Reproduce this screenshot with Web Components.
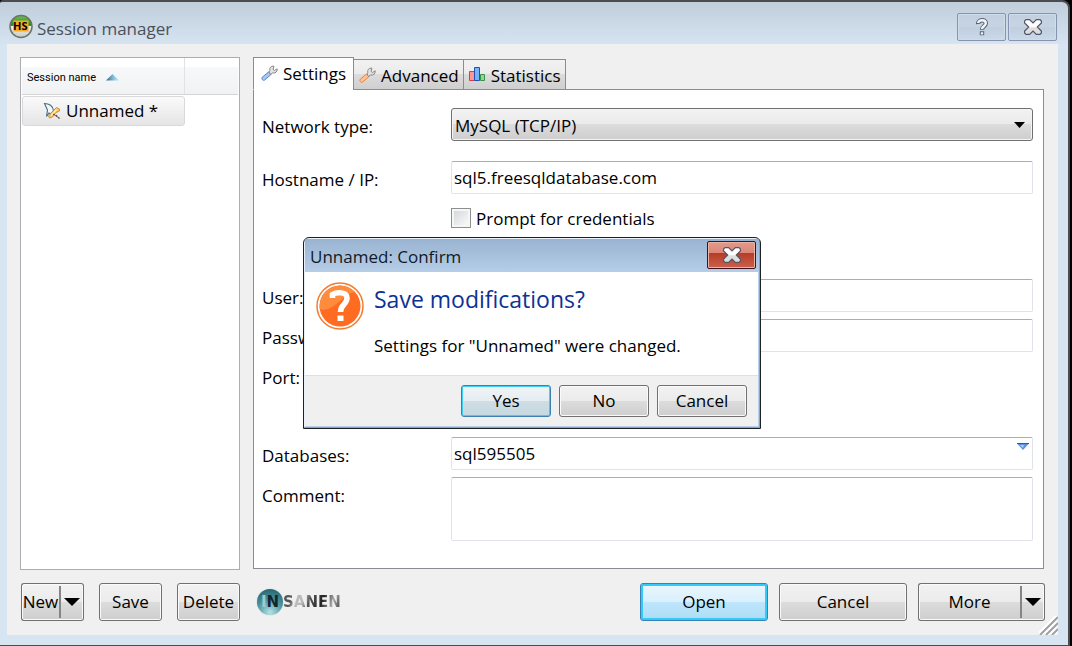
<!DOCTYPE html>
<html lang="en">
<head>
<meta charset="utf-8">
<title>Session manager</title>
<style>
html, body { margin: 0; background: #000; }
body { font: 17px/24px "Open Sans", "Noto Sans", sans-serif; color: #000; }
</style>
</head>
<body>
<app-window></app-window>

<template id="t-button">
<style>
:host { display: block; height: 38px; }
.wrap { display: flex; height: 100%; position: relative; }
button { flex: 1; min-width: 0; box-sizing: border-box; height: 100%; padding: 0; margin: 0; font: inherit; line-height: 24px; color: inherit; white-space: nowrap;
  border: 1px solid #707070; border-radius: 3px; box-shadow: inset 0 0 0 1px #fafafa;
  background: linear-gradient(#f2f2f2, #ebebeb 49%, #dcdcdc 50%, #cecece); }
:host([kind="default"]) button { border-color: #3c7fb1; box-shadow: inset 0 0 0 2px #31cbf9; background: linear-gradient(#eaf6fd, #d9f0fc 49%, #bee6fd 50%, #aedcf5); }
:host([kind="focus"]) button { border-color: #3c7fb1; box-shadow: inset 0 0 0 1px #3fd0f8; background: linear-gradient(#f0f4f6, #e5edf1 49%, #cfdde4 50%, #c6d8e0); }
:host([split]) button:first-child { border-right: 0; border-radius: 3px 0 0 3px; box-shadow: inset 1px 1px #fafafa, inset 0 -1px #fafafa; }
.arrow { display: none; }
:host([split]) .arrow { display: block; flex: 0 0 25px; border-left: 0; border-radius: 0 3px 3px 0; padding: 0; box-shadow: inset -1px 1px #fafafa, inset 0 -1px #fafafa; }
:host([split]) .arrow span { display: flex; height: 32px; margin: 2px 0; border-left: 2px solid #858585; align-items: center; justify-content: center; }
</style>
<div class="wrap"><button type="button"><slot></slot></button><button type="button" class="arrow" aria-label="More choices"><span><svg width="16" height="8"><path d="M0 0h16L8 8z"/></svg></span></button></div>
</template>

<template id="t-caption">
<style>
:host { display: block; width: 49px; height: 28px; }
button { display: flex; align-items: center; justify-content: center; width: 100%; height: 100%; box-sizing: border-box; padding: 0; border: 1px solid #8593b0; border-radius: 2px; background: linear-gradient(#c1cfde, #c6d4e3 50%, #bfcfe0 51%, #cbd9e8); box-shadow: inset 0 0 0 1px #d0dcea; }
:host([tone="red"]) button { border-color: #40121c; background: linear-gradient(#e29a8c, #dc8676 43%, #b73c26 44%, #c9614d); box-shadow: inset 0 0 0 1px #ecb3a5; }
svg { display: block; }
.help { display: none; }
:host([icon="help"]) .help { display: block; }
:host([icon="help"]) .cross { display: none; }
</style>
<button type="button">
<svg class="cross" width="18" height="16" viewBox="0 0 18 16"><defs><linearGradient id="g" x2="0" y2="1"><stop offset=".5" stop-color="#fff"/><stop offset=".55" stop-color="#dedede"/></linearGradient></defs><path d="M2 .6h3.600L9 4l3.400-3.400H16l1.400 1.400v2L13.300 8l4.100 4v2L16 15.400h-3.600L9 12l-3.400 3.400H2L.6 14v-2L4.700 8 .6 4V2z" fill="url(#g)" stroke="#535666" stroke-width="1.200"/></svg>
<svg class="help" width="12" height="18" viewBox="0 0 12 18"><path d="M2.200 6C1.800 1.200 9.800 1 9.800 5.200c0 3-3.800 3-3.800 6.600M6 13.300v3.900" fill="none" stroke="#5a6376" stroke-width="4.400"/><path d="M2.200 5C2.200 1.300 9.800 1.300 9.800 5.200c0 3-3.800 3-3.800 5.900M6 14.200v2.200" fill="none" stroke="#f2f5f7" stroke-width="2.400"/></svg>
</button>
</template>

<template id="t-sessions">
<style>
:host { display: block; box-sizing: border-box; border: 1px solid #abadb3; background: #fff; padding: 0 1px; }
table { width: 100%; border-collapse: separate; border-spacing: 0; table-layout: fixed; }
th { height: 37px; padding: 4px 0 0 5px; box-sizing: border-box; font: 11px/14px Roboto, sans-serif; text-align: left; border-bottom: 1px solid #d5d5d5; background: linear-gradient(#fff 24%, #f7f8fa 25%, #f1f2f4); }
th.first { width: 163px; box-shadow: inset -1px 0 #dfe3e8; }
.sort { margin-left: 10px; }
td { padding: 1px 0 0; }
a { display: flex; align-items: center; box-sizing: border-box; height: 30px; padding: 0 0 0 20px; border: 1px solid #d9d9d9; border-radius: 3px; background: linear-gradient(#fafafa, #e5e5e5); color: #000; text-decoration: none; gap: 5px; }
</style>
<table>
<thead><tr><th class="first" scope="col">Session name<svg class="sort" width="13" height="7"><defs><linearGradient id="s"><stop stop-color="#2f6480"/><stop offset=".6" stop-color="#8cc4e0"/><stop offset="1" stop-color="#c4e6f4"/></linearGradient></defs><path d="M0 6.500L6.500 0l6.500 6.500z" fill="url(#s)"/></svg></th><th aria-label="Details"></th></tr></thead>
<tbody><tr><td><a href="#unnamed"><svg width="18" height="18" viewBox="0 0 18 18"><path d="M1.500 1.500C6 1.500 10 4 10.500 8.500L8 12l-2-1-2.500 3.500L4.500 8z" fill="#f3f8fa" stroke="#426e80" stroke-width="1.100"/><path d="M10.500 8.500l3-3 3 1.500v2L13 10.500 9.500 15l-3 1-1-2z" fill="#f7c665" stroke="#b9802f" stroke-width=".8"/><path d="M10 12l3 1.500 3.500 3" stroke="#6b5138" stroke-width="1.500" stroke-dasharray="2 1"/><path d="M8 13.500l5.500-6" stroke="#fff0b0" stroke-width="1.200"/></svg>Unnamed *</a></td><td></td></tr></tbody>
</table>
</template>

<template id="t-field">
<style>
:host { display: grid; grid-template-columns: 189px minmax(0, 1fr); align-items: start; }
label { line-height: 24px; padding-top: 7px; }
.box { position: relative; display: flex; }
input, textarea, select { box-sizing: border-box; width: 100%; margin: 0; font: inherit; line-height: 24px; color: inherit; outline: 0; height: 33px; border-radius: 2px; }
input, textarea { display: block; resize: none; padding: 0 2px; border: 1px solid #e2e3ea; border-top-color: #abadb3; background: #fff; }
textarea { height: 64px; }
.short { width: 120px; }
select { appearance: none; padding: 2px 24px 0 3px; border: 1px solid #707070; border-radius: 3px; box-shadow: inset 0 0 0 1px #f4f4f4; background: linear-gradient(#f2f2f2, #ebebeb 49%, #dcdcdc 50%, #cecece); }
.drop { position: absolute; right: 8px; top: 14px; pointer-events: none; }
.blue { position: absolute; right: 4px; top: 6px; }
</style>
<label for="c"></label><div class="box"></div>
</template>

<template id="t-check">
<style>
:host { display: flex; margin-left: 189px; height: 20px; align-items: center; gap: 5px; }
input { appearance: none; flex: none; width: 20px; height: 20px; box-sizing: border-box; margin: 0; border: 1px solid #8e8f8f; background: linear-gradient(135deg, #cfd3d9, #f5f5f5 80%); box-shadow: inset 0 0 0 2px #f6f6f6; }
label { padding-top: 2px; }
</style>
<input type="checkbox" id="k"><label for="k"><slot></slot></label>
</template>

<template id="t-tabs">
<style>
:host { display: flex; flex-direction: column; }
.tabs { display: flex; align-items: flex-end; position: relative; margin-bottom: -1px; }
button { display: flex; align-items: center; box-sizing: border-box; height: 31px; margin: 0 0 0 -1px; padding: 2px 4px 0 5px; gap: 5px; white-space: nowrap; font: inherit; line-height: 24px; color: inherit; border: 1px solid #898c95; background: linear-gradient(#f2f2f2, #ebebeb 49%, #dcdcdc 50%, #cfcfcf); }
button.on { height: 33px; margin: 0; padding: 0 7px; background: #fff; border-bottom-color: #fff; }
svg { display: block; flex: none; }
.page { flex: 1; border: 1px solid #898c95; background: #fff; padding: 18px 10px 27px 8px; }
</style>
<div class="tabs" role="tablist">
<button type="button" role="tab" aria-selected="true" class="on"><svg width="17" height="17" viewBox="0 0 17 17"><path d="M7.500 7L1.200 12.300c-1.200 1.300.8 3.800 2.400 2.800L10 9.500z" fill="#a9c8f7" stroke="#5982cf"/><path d="M8 7l1.500 2.500 2-1.500c3 .5 5-1.300 4.700-4.200L13.500 5.500 12 4.300 13 1.200C9.800.8 8.200 3 8.800 5.500z" fill="#e3e3e3" stroke="#858585"/></svg>Settings</button>
<button type="button" role="tab" aria-selected="false"><svg width="17" height="17" viewBox="0 0 17 17"><path d="M7.500 7L1.200 12.300c-1.200 1.300.8 3.800 2.400 2.800L10 9.500z" fill="#ffc393" stroke="#ef8140"/><path d="M8 7l1.500 2.500 2-1.500c3 .5 5-1.300 4.700-4.200L13.500 5.500 12 4.300 13 1.200C9.800.8 8.200 3 8.800 5.500z" fill="#e3e3e3" stroke="#858585"/></svg>Advanced</button>
<button type="button" role="tab" aria-selected="false"><svg width="17" height="17" viewBox="0 0 17 17"><path d="M.5 4.500h5v9h-5z" fill="#ff9690" stroke="#dc3b45"/><path d="M11.500 7.500h4v6h-4z" fill="#93d595" stroke="#389448"/><path d="M5.500.5h5v13h-5z" fill="#76b2f8" stroke="#1e50b5"/></svg>Statistics</button>
</div>
<div class="page" role="tabpanel"><slot></slot></div>
</template>

<template id="t-dialog">
<style>
:host { display: block; box-sizing: border-box; width: 458px; border: 1px solid #1c2226; border-radius: 6px 6px 0 0; background: #b9d1ea; padding: 1px; box-shadow: inset -1px -1px #37c4ea, inset 1px 1px #e8f1fa; overflow: hidden; }
header { display: flex; height: 33px; padding: 0 3px 0 5px; background: linear-gradient(#99b4d1, #b5cde7); }
h1 { flex: 1; margin: 0; padding-top: 6px; font: inherit; line-height: 24px; color: #111a26; }
caption-button { margin-top: 2px; }
.main { display: flex; gap: 10px; height: 103px; background: #fff; padding: 10px 10px 0 11px; margin-right: 1px; box-sizing: border-box; }
h2 { margin: 0 0 18px; font: inherit; font-size: 23px; line-height: 34px; color: #0c3296; }
p { margin: 0; }
footer { display: flex; justify-content: flex-end; gap: 8px; height: 51px; box-sizing: border-box; padding: 9px 11px 0; margin: 0 1px 1px 0; border-top: 1px solid #dfdfdf; background: #f0f0f0; }
win-button { width: 90px; height: 32px; }
svg { flex: none; }
</style>
<header><h1>Unnamed: Confirm</h1><caption-button icon="close" tone="red" label="Close dialog"></caption-button></header>
<div class="main">
<svg width="48" height="48" viewBox="0 0 48 48"><circle cx="24" cy="24" r="23" fill="#fff" stroke="#f37b31" stroke-width="1.500"/><circle cx="24" cy="24" r="20.500" fill="#ff6b21"/><path d="M3.800 27A20.500 20.500 0 0 1 39 10C30 11 24 21 14 26c-4 2-8 2-10.200 1z" fill="#ff8c3d"/><path d="M16.500 16v-3.500c4-2.500 14.500-3 14.500 3.500 0 7-6.500 6-6.500 14" fill="none" stroke="#fff" stroke-width="5.500"/><path d="M21.500 33.500h6v5.500h-6z" fill="#fff"/></svg>
<div><h2>Save modifications?</h2><p>Settings for "Unnamed" were changed.</p></div>
</div>
<footer><win-button kind="focus">Yes</win-button><win-button>No</win-button><win-button>Cancel</win-button></footer>
</template>

<template id="t-logo">
<style>
:host { display: flex; align-items: center; height: 28px; font: bold 15px/18px "DejaVu Sans", sans-serif; }
.ball { display: flex; align-items: center; justify-content: center; width: 26px; height: 26px; border-radius: 50%; background: radial-gradient(circle at 50% 90%, #b4e2e5, #4a929d 50%, #2b6673 85%); box-shadow: 0 0 1px #6fb5be; }
.ball span { color: #12272c; } .ball i { font-style: normal; color: #a6c8cc; }
.rest { background: linear-gradient(110deg, #555 0 15%, #bbb 25% 35%, #555 45%, #222 65%, #aaa 82%, #333); -webkit-background-clip: text; background-clip: text; color: transparent; }
</style>
<div class="ball"><span><i>I</i>N</span></div><span class="rest">SANEN</span>
</template>

<template id="t-window">
<style>
:host { display: block; position: relative; }
.frame { display: flex; flex-direction: column; box-sizing: border-box; min-height: 100vh; margin-right: 2px; padding: 0 10px 10px 7px; border: solid #4c4c50; border-width: 2px 2px 1px 0; border-radius: 3px 8px 0 0; background: linear-gradient(#c0cddb, #d7e4f1 44px); }
.bar { display: flex; height: 42px; padding: 0 1px 0 2px; gap: 2px; }
h1 { flex: 1; margin: 0; padding: 15px 0 0 2px; font: inherit; line-height: 24px; color: #49525c; }
.hs { flex: none; margin-top: 12px; }
.hs text { font: bold 11px "Open Sans", sans-serif; }
.bar caption-button { margin-top: 11px; }
.content { position: relative; flex: 1; display: flex; flex-direction: column; gap: 13px; padding: 13px 13px 14px; background: #f0f0f0; }
.cols { flex: 1; display: grid; grid-template-columns: 220px minmax(0, 1fr); gap: 13px; }
settings-tabs { margin-bottom: 1px; margin-right: 1px; }
form { display: block; }
form-field + form-field { margin-top: 7px; }
form-field.wide { margin-top: 20px; }
check-option { margin-top: 14px; }
form-field.user { margin-top: 51px; }
form-field.db { margin-top: 45px; }
.foot { display: flex; gap: 15px; padding-left: 1px; }
.foot win-button { width: 63px; }
insanen-logo { margin: 5px auto 0 2px; }
.right { display: flex; gap: 11px; }
.right win-button { width: 128px; }
.right win-button[split] { width: 127px; }
.grip { position: absolute; right: 0; bottom: 0; }
confirm-dialog { position: absolute; left: 303px; top: 237px; }
</style>
<div class="frame">
<div class="bar">
<svg class="hs" width="24" height="25" viewBox="0 0 24 25"><defs><linearGradient id="b" x2="0" y2="1"><stop stop-color="#6cc455"/><stop offset=".45" stop-color="#1c8a1a"/><stop offset=".5" stop-color="#eee"/><stop offset="1" stop-color="#c9c9c6"/></linearGradient></defs><circle cx="12" cy="12.500" r="11" fill="url(#b)" stroke="#6c7565" stroke-width="1.500"/><path d="M4.500 6.500h15v11h-15z" fill="#f8a823"/><text x="4" y="16">HS</text></svg>
<h1>Session manager</h1>
<caption-button icon="help" label="Help"></caption-button><caption-button icon="close" label="Close"></caption-button>
</div>
<div class="content">
<div class="cols">
<session-list></session-list>
<settings-tabs><form>
<form-field kind="select" label="Network type:" value="MySQL (TCP/IP)"></form-field>
<form-field class="wide" label="Hostname / IP:" value="sql5.freesqldatabase.com"></form-field>
<check-option>Prompt for credentials</check-option>
<form-field class="user" label="User:"></form-field>
<form-field kind="password" label="Password:"></form-field>
<form-field kind="short" label="Port:"></form-field>
<form-field class="db" kind="combo" label="Databases:" value="sql595505"></form-field>
<form-field kind="area" label="Comment:"></form-field>
</form></settings-tabs>
</div>
<div class="foot">
<win-button split>New</win-button><win-button>Save</win-button><win-button>Delete</win-button>
<insanen-logo></insanen-logo>
<div class="right"><win-button kind="default">Open</win-button><win-button>Cancel</win-button><win-button split>More</win-button></div>
</div>
<svg class="grip" width="19" height="19"><path d="M0 19L19 0M7 19L19 7M13 19l6-6" stroke="#fff" stroke-width="5"/><path d="M1 19L19 1M7 19L19 7M13 19l6-6" stroke="#a0a0a0" stroke-width="2"/></svg>
</div>
</div>
<confirm-dialog role="dialog" aria-label="Unnamed: Confirm"></confirm-dialog>
</template>

<script>
class Base extends HTMLElement {
  constructor() {
    super();
    this.attachShadow({ mode: "open" }).append(document.getElementById(this.constructor.template).content.cloneNode(true));
  }
}
const simple = (name, id) => customElements.define(name, class extends Base { static template = id; });

customElements.define("caption-button", class extends Base {
  static template = "t-caption";
  connectedCallback() { this.shadowRoot.querySelector("button").setAttribute("aria-label", this.getAttribute("label")); }
});

customElements.define("form-field", class extends Base {
  static template = "t-field";
  connectedCallback() {
    const kind = this.getAttribute("kind"), value = this.getAttribute("value") || "";
    const box = this.shadowRoot.querySelector(".box");
    this.shadowRoot.querySelector("label").textContent = this.getAttribute("label");
    if (kind === "select") {
      box.innerHTML = '<select id="c"><option></option></select><svg class="drop" width="11" height="6"><path d="M0 0h11L5.500 6z"/></svg>';
      box.querySelector("option").textContent = value;
      return;
    }
    const control = document.createElement(kind === "area" ? "textarea" : "input");
    control.id = "c";
    if (kind === "password") control.type = "password";
    if (kind === "short") control.className = "short";
    control.value = value;
    box.replaceChildren(control);
    if (kind === "combo") box.insertAdjacentHTML("beforeend", '<svg class="blue" width="12" height="7"><path d="M0 .5h12L6 7z" fill="#5b93e0"/><path d="M0 .5h12" stroke="#2a55b5"/><path d="M3 2h4L6 5z" fill="#a9cdf8"/></svg>');
  }
});

simple("win-button", "t-button");
simple("session-list", "t-sessions");
simple("check-option", "t-check");
simple("settings-tabs", "t-tabs");
simple("confirm-dialog", "t-dialog");
simple("insanen-logo", "t-logo");
simple("app-window", "t-window");
</script>
</body>
</html>
